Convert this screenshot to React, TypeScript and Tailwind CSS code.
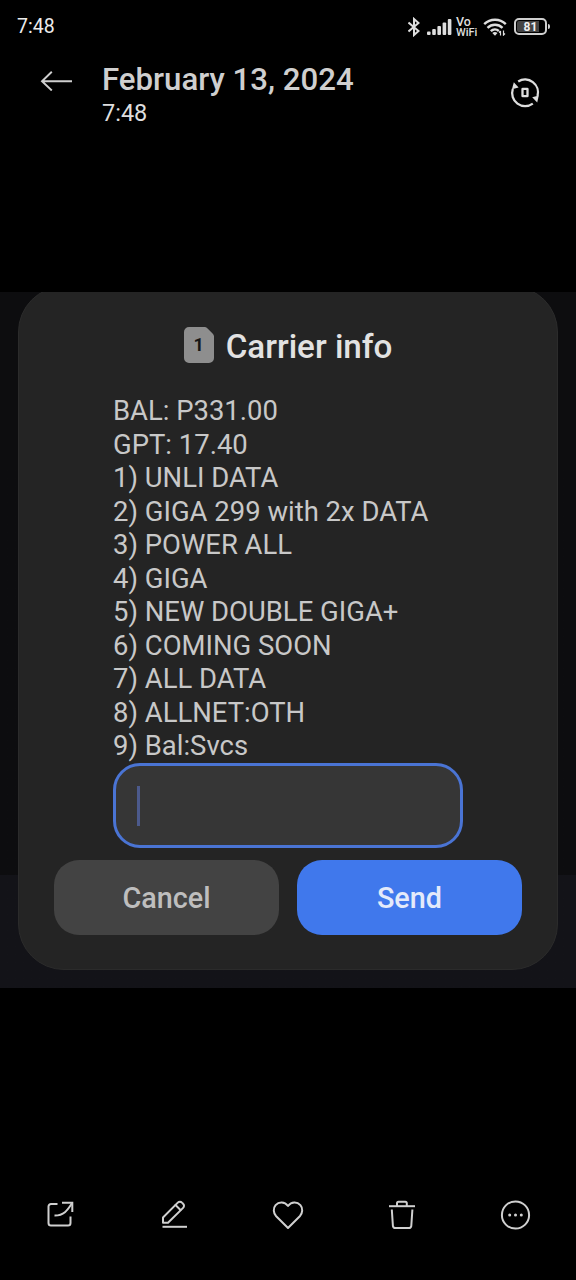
import type { ReactNode } from "react"

const MENU_LINES = [
  "BAL: P331.00",
  "GPT: 17.40",
  "1) UNLI DATA",
  "2) GIGA 299 with 2x DATA",
  "3) POWER ALL",
  "4) GIGA",
  "5) NEW DOUBLE GIGA+",
  "6) COMING SOON",
  "7) ALL DATA",
  "8) ALLNET:OTH",
  "9) Bal:Svcs",
]

function Icon({ children, className }: { children: ReactNode; className?: string }) {
  return (
    <svg
      className={className ?? "w-8 h-8"}
      viewBox="0 0 32 32"
      fill="none"
      stroke="currentColor"
      strokeWidth={2}
      strokeLinecap="round"
      strokeLinejoin="round"
    >
      {children}
    </svg>
  )
}

function StatusBar() {
  return (
    <div className="flex h-[53px] items-center justify-between pl-[17px] pr-[26px]">
      <span className="pt-px text-[19.500px] leading-none text-[#ececec]">7:48</span>
      <div className="flex items-center text-[#dedede]">
        {/* Bluetooth */}
        <svg className="h-5 w-3" viewBox="0 0 12 20" fill="none" stroke="currentColor" strokeWidth={2}>
          <path d="M0.500 5.500 10.500 14 6 18V2l4.500 4L0.500 14.500" />
        </svg>
        {/* Signal */}
        <svg className="ml-[7px] h-4 w-[25px]" viewBox="0 0 25 16" fill="currentColor">
          <rect x="0" y="12.500" width="3.600" height="3.500" rx="1" />
          <rect x="5.200" y="10" width="3.600" height="6" rx="1" />
          <rect x="10.400" y="7" width="3.600" height="9" rx="1" />
          <rect x="15.600" y="3.500" width="3.600" height="12.500" rx="1" />
          <rect x="20.800" y="0" width="3.600" height="16" rx="1" />
        </svg>
        <div className="ml-1 w-[23px] font-medium">
          <p className="text-[12.500px] leading-[11px]">Vo</p>
          <p className="text-[11px] leading-[11px]">WiFi</p>
        </div>
        {/* Wi-Fi */}
        <svg className="ml-1 h-[18px] w-6" viewBox="0 0 24 18" fill="none" stroke="currentColor" strokeWidth={2.4}>
          <path d="M1.200 6.200a15.500 15.500 0 0 1 21.600 0" />
          <path d="M4.500 9.800a10.800 10.800 0 0 1 15 0" />
          <path d="M7.800 13.200a6 6 0 0 1 8 -0.200" />
          <path d="M9.300 15a4 4 0 0 1 5.200 0L12 17.800z" fill="currentColor" stroke="none" />
          <path d="M17.500 17.500v-4.500M16 14.500l1.500-1.500M20.500 12.500V17l1.500-1.500" strokeWidth={1.200} />
        </svg>
        {/* Battery */}
        <div className="ml-[7px] flex h-[17px] w-[33px] items-center justify-center rounded-[5px] border-2 border-[#cfcfcf] p-px">
          <span className="flex h-full w-full items-center justify-center rounded-[2px] bg-linear-to-r from-[#444] from-80% to-transparent to-80% text-[12px] leading-none font-bold text-[#f0f0f0]">
            81
          </span>
        </div>
        <span className="ml-px h-[5px] w-0.5 rounded-r bg-[#cfcfcf]" />
      </div>
    </div>
  )
}

function Header() {
  return (
    <header className="flex h-[89px] items-start pl-[40px] pr-[36px]">
      <svg className="mt-[18px] h-5 w-8" viewBox="0 0 32 20" fill="none" stroke="#cfcfcf" strokeWidth={1.900}>
        <path d="M32 10.300H2M11.800 0.700 2 10.300l9.800 9.200" />
      </svg>
      <div className="ml-[30px] flex-1">
        <h1 className="mt-[9px] text-[31.200px] leading-[36px] font-medium text-[#cfcfcf]">February 13, 2024</h1>
        <p className="text-[23.500px] leading-[30px] text-[#dedede]">7:48</p>
      </div>
      {/* Rotate */}
      <svg className="mt-[25px] h-[30px] w-[30px] text-[#dedede]" viewBox="0 0 30 30" fill="none" stroke="currentColor" strokeWidth={2.300}>
        <path d="M8.200 3.400A13 13 0 0 1 27.500 18" />
        <path d="M22.800 25.600A13 13 0 0 1 2.800 11" />
        <path d="M3.800 4.200 2 11.200l6.600-1.600z" fill="currentColor" stroke="none" />
        <path d="m27.200 24.600 1.600-7-6.600 1.600z" fill="currentColor" stroke="none" />
        <rect x="12.500" y="10.800" width="5" height="7.400" rx="0.300" />
      </svg>
    </header>
  )
}

function CarrierDialog() {
  return (
    <div className="mx-[18px] -mt-[6px] flex h-[684px] flex-col rounded-[46px] border border-[#2b2b2b] bg-[#242424] px-[35px] pb-[34px]">
      <div className="mt-[40px] flex h-[36px] items-center justify-center">
        <div className="relative mr-[12px] flex h-9 w-[30px] items-center justify-center">
          <svg className="absolute inset-0 h-full w-full" viewBox="0 0 30 36" fill="#8e8e8e">
            <path d="M5 0h15.500a4 4 0 0 1 2.800 1.200l5.500 5.600A4 4 0 0 1 30 9.600V31a5 5 0 0 1-5 5H5a5 5 0 0 1-5-5V5a5 5 0 0 1 5-5z" />
          </svg>
          <span className="relative text-[18px] leading-none font-bold text-[#161616]">1</span>
        </div>
        <h2 className="mt-[3px] text-[33.200px] leading-[36px] font-medium text-[#e2e2e2]">Carrier info</h2>
      </div>

      <div className="mt-[32px] ml-[59px] w-[350px]">
        {MENU_LINES.map((line) => (
          <p key={line} className="h-[33.550px] text-[27.450px] leading-[33.550px] whitespace-nowrap text-[#c8c8c8]">
            {line}
          </p>
        ))}
        <div className="-mt-px flex h-[85px] items-center rounded-[27px] border-3 border-[#4a74d4] bg-[#363636] pl-[21px]">
          <span className="h-10 w-[3px] bg-[#4c5a8c]" />
        </div>
      </div>

      <div className="mt-auto grid grid-cols-2 gap-[18px] text-[28.800px] font-medium">
        <button className="h-[75px] rounded-[25px] bg-[#434343] pt-[3px] text-[#bebebe]">Cancel</button>
        <button className="h-[75px] rounded-[25px] bg-[#4078ec] pt-[3px] text-[#e4eafa]">Send</button>
      </div>
    </div>
  )
}

function Toolbar() {
  return (
    <nav className="mt-auto mb-[49px] flex justify-between px-[44px] text-[#d0d0d0]">
      {/* Share */}
      <Icon>
        <path d="M13.500 5H7a2.500 2.500 0 0 0-2.500 2.500V24A2.500 2.500 0 0 0 7 26.500h17A2.500 2.500 0 0 0 26.500 24v-6.500" strokeLinecap="butt" />
        <path d="M18 3.800h10.300V13" strokeLinecap="butt" strokeLinejoin="miter" />
        <path d="M28 4.200c-4 6-7.500 12.500-17.500 12.300" strokeLinecap="butt" />
      </Icon>
      {/* Edit */}
      <Icon>
        <path d="M4.500 27.800h24.500" strokeLinecap="butt" />
        <path d="M5 18.500 19.800 3.600a2.900 2.900 0 0 1 4.200 0l1.100 1.100a2.900 2.900 0 0 1 0 4.200L10 23.700H5z" />
        <path d="m17.500 6 5 5" />
      </Icon>
      {/* Favourite */}
      <Icon>
        <path d="M16 29 4.200 17.200C1.200 14 1 9.200 3.600 6.200 7 2.400 12.500 2.600 16 7c3.500-4.400 9-4.600 12.400-.8 2.600 3 2.400 7.800-.6 11z" />
      </Icon>
      {/* Delete */}
      <Icon>
        <path d="M3 7.200h26" strokeLinecap="butt" />
        <path d="M11 7V4.300A1.500 1.500 0 0 1 12.500 2.800h6.800a1.500 1.500 0 0 1 1.500 1.500V7" />
        <path d="m5.800 10.500 1.100 16.300a2.500 2.500 0 0 0 2.500 2.200h13.400a2.500 2.500 0 0 0 2.500-2.200l1.100-16.300" strokeLinecap="butt" />
      </Icon>
      {/* More */}
      <Icon>
        <circle cx="15.500" cy="16" r="13.600" />
        <path d="M9.700 16h.01M15.500 16h.01M21.300 16h.01" strokeWidth={3} />
      </Icon>
    </nav>
  )
}

export default function App() {
  return (
    <div className="flex h-[1280px] w-[576px] flex-col overflow-hidden bg-black font-[Roboto,sans-serif]">
      <StatusBar />
      <Header />
      {/* Opened photo */}
      <main className="mt-[150px] flow-root h-[696px] shrink-0 overflow-hidden bg-linear-to-b from-[#0d0d0f] from-[583px] to-[#131318] to-[583px]">
        <CarrierDialog />
      </main>
      <Toolbar />
    </div>
  )
}
